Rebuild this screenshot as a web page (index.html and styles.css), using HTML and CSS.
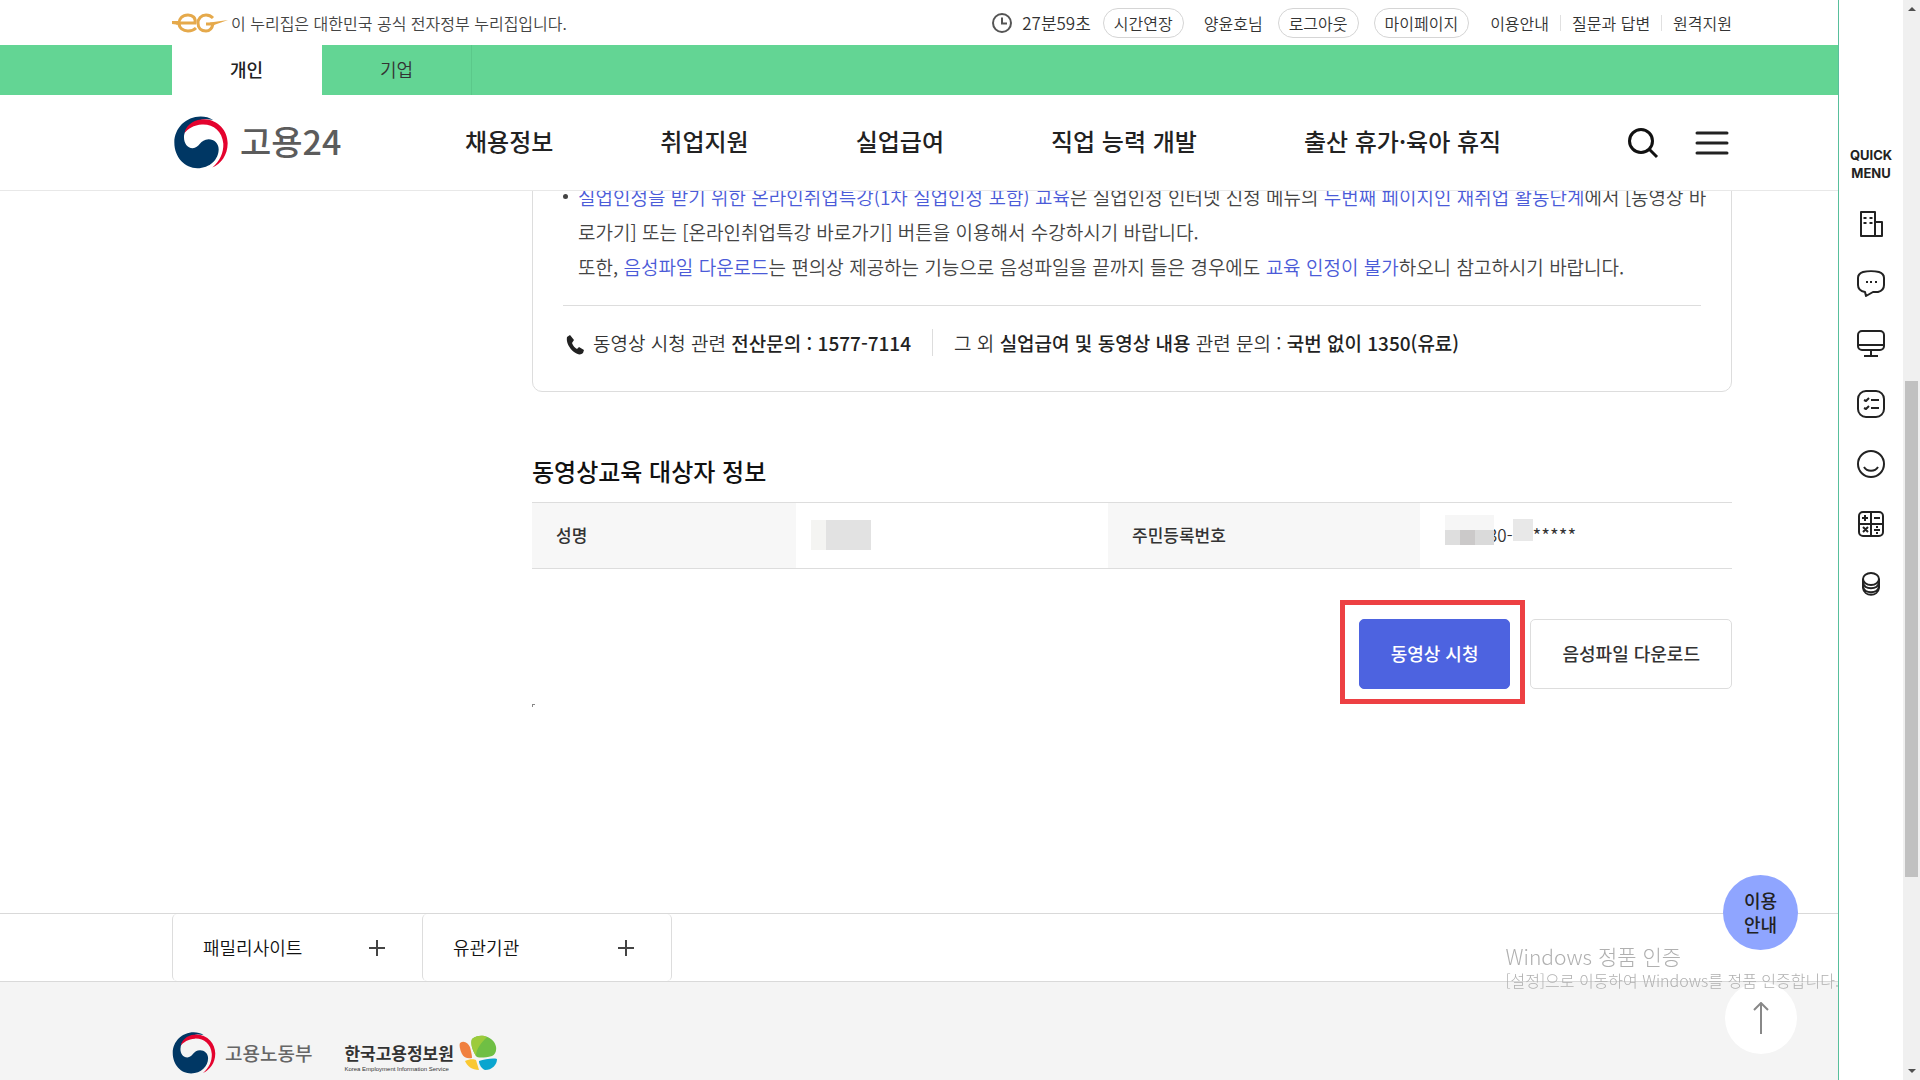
FILE: index.html
```html
<!DOCTYPE html>
<html lang="ko">
<head>
<meta charset="utf-8">
<meta name="viewport" content="width=device-width, initial-scale=1">
<title>고용24</title>
<link rel="stylesheet" href="styles.css">
</head>
<body>
<svg class="defs" width="0" height="0" aria-hidden="true">
  <symbol id="emblem" viewBox="42 351 162 158">
    <path fill="#003764" d="M160 363C148 355 136 352 122 352C78 352 43 387 43 430C43 475 75 507 112 507C150 507 176 480 176 450C176 432 162 420 146 420C120 420 118 447 98 447C82 447 72 432 72 415C72 385 104 364 130 361C142 360 152 361 160 363Z"/>
    <path fill="#e4032e" d="M73 402C80 372 108 360 132 360C175 361 203 395 203 432C203 468 182 495 157 505C180 486 191 460 190 434C187 395 158 374 126 376C102 377 82 390 73 402Z"/>
  </symbol>
</svg>

<div class="page">
  <header class="header">
    <div class="wrap util">
      <svg class="eg" width="56" height="20" viewBox="0 0 56 20" fill="none" stroke="#e5a94b" stroke-width="3" aria-hidden="true">
        <path d="M4 10H23C24 5 21 2 16 2C10 2 7 6 7 10C7 15 11 18 16 18C19 18 22 17 24 15"/>
        <path d="M41 5C39 3 37 2 34 2C29 2 26 6 26 10C26 15 29 18 34 18C38 18 40 16 41 11H34"/>
        <path fill="#e5a94b" stroke="none" d="M0 8H8V12L0 11ZM38 9.500L56 7L42 12H36Z"/>
      </svg>
      <span class="official">이 누리집은 대한민국 공식 전자정부 누리집입니다.</span>
      <div class="util-right">
        <svg class="clock" width="20" height="20" viewBox="0 0 20 20" fill="none" stroke="#555" stroke-width="2" aria-hidden="true"><circle cx="10" cy="10" r="9"/><path d="M10 4.500V10.500H15"/></svg>
        <span class="time">27분59초</span>
        <button class="pill" type="button">시간연장</button>
        <span class="user">양윤호님</span>
        <button class="pill" type="button">로그아웃</button>
        <button class="pill pill-my" type="button">마이페이지</button>
        <ul class="util-links">
          <li><a href="#">이용안내</a></li>
          <li><a href="#">질문과 답변</a></li>
          <li><a href="#">원격지원</a></li>
        </ul>
      </div>
    </div>
    <div class="band">
      <div class="wrap tabs">
        <a class="tab tab-on" href="#">개인</a>
        <a class="tab" href="#">기업</a>
      </div>
    </div>
    <div class="wrap gnb">
      <a class="logo" href="#"><svg width="54" height="53" aria-hidden="true"><use href="#emblem"/></svg><span>고용24</span></a>
      <nav class="menu">
        <a href="#">채용정보</a>
        <a href="#">취업지원</a>
        <a href="#">실업급여</a>
        <a href="#">직업 능력 개발</a>
        <a href="#">출산 휴가·육아 휴직</a>
      </nav>
      <div class="tools">
        <button class="icon-btn" type="button" aria-label="검색"><svg width="32" height="32" viewBox="0 0 32 32" fill="none" stroke="#111" stroke-width="3"><circle cx="14" cy="14" r="11.500"/><path d="M22 22L30 30"/></svg></button>
        <button class="icon-btn" type="button" aria-label="전체메뉴"><svg width="34" height="24" viewBox="0 0 34 24" stroke="#222" stroke-width="3" stroke-linecap="round"><path d="M2 2H32M2 12H32M2 22H32"/></svg></button>
      </div>
    </div>
  </header>

  <main class="main">
    <div class="wrap">
      <div class="content">
        <section class="notice">
          <ul class="notice-list">
            <li><em>실업인정을 받기 위한 온라인취업특강(1차 실업인정 포함) 교육</em>은 실업인정 인터넷 신청 메뉴의 <em>두번째 페이지인 재취업 활동단계</em>에서 [동영상 바<br>로가기] 또는 [온라인취업특강 바로가기] 버튼을 이용해서 수강하시기 바랍니다.<br>또한, <em>음성파일 다운로드</em>는 편의상 제공하는 기능으로 음성파일을 끝까지 들은 경우에도 <em>교육 인정이 불가</em>하오니 참고하시기 바랍니다.</li>
          </ul>
          <div class="contact">
            <svg class="phone" width="18" height="20" viewBox="0 0 18 20" aria-hidden="true"><path fill="#222" d="M1 2L4 0L8 5L6 8C7 11 9 13 11 14L13 12L18 15L17 18C15 20 12 20 8 17C3 13 0 7 1 2Z"/></svg>
            <p class="contact-a">동영상 시청 관련 <strong>전산문의 : 1577-7114</strong></p>
            <p class="contact-b">그 외 <strong>실업급여 및 동영상 내용</strong> 관련 문의 : <strong>국번 없이 1350(유료)</strong></p>
          </div>
        </section>

        <h2 class="title">동영상교육 대상자 정보</h2>
        <table class="info">
          <tbody>
            <tr>
              <th class="col-name" scope="row">성명</th>
              <td><span class="mask mask-name"></span></td>
              <th scope="row">주민등록번호</th>
              <td><div class="rrn"><span class="mask mask-a"></span><span>30-</span><span class="mask mask-b"></span><span class="stars">*****</span></div></td>
            </tr>
          </tbody>
        </table>
        <div class="actions">
          <div class="mark"><button class="btn btn-primary" type="button">동영상 시청</button></div>
          <button class="btn btn-audio" type="button">음성파일 다운로드</button>
        </div>
        <div class="speck"></div>
      </div>
    </div>
  </main>

  <footer class="footer">
    <div class="sites">
      <div class="wrap sites-row">
        <button class="site" type="button">패밀리사이트<svg width="16" height="16" viewBox="0 0 16 16" stroke="#444" stroke-width="2"><path d="M8 0V16M0 8H16"/></svg></button>
        <button class="site" type="button">유관기관<svg width="16" height="16" viewBox="0 0 16 16" stroke="#444" stroke-width="2"><path d="M8 0V16M0 8H16"/></svg></button>
      </div>
    </div>
    <div class="wrap orgs">
      <a class="org" href="#"><svg width="44" height="42" aria-hidden="true"><use href="#emblem"/></svg><span class="org-moel">고용노동부</span></a>
      <a class="org org-b" href="#">
        <span class="org-keis">한국고용정보원<small>Korea Employment Information Service</small></span>
        <svg width="40" height="36" viewBox="0 0 40 36" aria-hidden="true"><path fill="#6fbf44" d="M13 4C20-2 31 1 35 7C39 13 37 19 33 21C25 23 18 23 17 21C14 16 11 9 13 4Z"/><path fill="#9ccb3b" d="M13 4C18 0 24 0 28 2C22 8 17 14 17 21C14 16 11 9 13 4Z"/><path fill="#f08040" d="M1 8C5 5 9 8 11 12C12 16 13 20 13 23C9 24 5 23 3 19C1 15 0 10 1 8Z"/><path fill="#fac832" d="M6 26C10 24 15 24 17 25L20 35C13 35 8 31 6 26Z"/><path fill="#0aa5cf" d="M20 26C26 24 34 23 38 24C38 30 33 35 26 35C23 34 20 30 20 26Z"/></svg>
      </a>
    </div>
  </footer>
</div>

<div class="floats">
  <button class="guide" type="button">이용<br>안내</button>
  <button class="top" type="button" aria-label="맨 위로"><svg width="16" height="32" viewBox="0 0 16 32" fill="none" stroke="#888" stroke-width="2"><path d="M8 32V2M1 8L8 1L15 8"/></svg></button>
</div>

<div class="activation"><p class="act-title">Windows 정품 인증</p><p class="act-text">[설정]으로 이동하여 Windows를 정품 인증합니다.</p></div>

<aside class="quick">
  <p class="quick-title">QUICK<br>MENU</p>
  <a href="#" aria-label="기업"><svg viewBox="0 0 28 28"><path d="M4 2H18V26H4ZM18 12H25V26H18"/><path d="M8 7V9M14 7V9M8 12V14M14 12V14" stroke-width="3"/></svg></a>
  <a href="#" aria-label="상담"><svg viewBox="0 0 28 28"><path d="M6 2C10 1 18 1 22 2C25 3 27 5 27 8V15C27 19 25 21 21 22H16L9 26L8 22C3 21 1 19 1 15V8C1 5 3 3 6 2Z"/><path d="M9 12H11M13 12H15M18 12H20"/></svg></a>
  <a href="#" aria-label="화면"><svg viewBox="0 0 28 28"><rect x="1" y="1" width="26" height="19" rx="4"/><path d="M1 15H27M14 20V26M7 26H21"/></svg></a>
  <a href="#" aria-label="목록"><svg viewBox="0 0 28 28"><rect x="1" y="1" width="26" height="26" rx="8"/><path d="M7 10L9 11L12 8M14 10H22M7 18L9 19L12 16M14 18H22"/></svg></a>
  <a href="#" aria-label="만족도"><svg viewBox="0 0 28 28"><circle cx="14" cy="14" r="13"/><path d="M7 17C10 22 18 22 21 17"/></svg></a>
  <a href="#" aria-label="계산기"><svg viewBox="0 0 28 28"><rect x="2" y="2" width="24" height="24" rx="4"/><path d="M14 2V26M2 14H26M5 8H11M8 5V11M17 8H23M6 17L11 22M11 17L6 22M17 20H23M20 16V18M20 22V24"/></svg></a>
  <a href="#" aria-label="수당"><svg viewBox="0 0 28 28"><ellipse cx="14" cy="9" rx="8" ry="6"/><path d="M6 9V18C7 27 21 27 22 18V9M6 13C8 20 20 20 22 13M6 17C8 24 20 24 22 17"/></svg></a>
</aside>

<div class="scroll" aria-hidden="true">
  <svg width="8" height="4" viewBox="0 0 8 4"><path fill="#505050" d="M0 4L4 0L8 4Z"/></svg>
  <div class="track"><div class="thumb"></div></div>
  <svg width="8" height="4" viewBox="0 0 8 4"><path fill="#505050" d="M0 0L4 4L8 0Z"/></svg>
</div>
</body>
</html>
```
FILE: styles.css
```css
* { box-sizing: border-box; }
html, body { height: 100%; }
body {
  margin: 0;
  overflow: hidden;
  background: #fff;
  color: #333;
  font-family: "Noto Sans CJK KR", sans-serif;
  font-size: 19px;
  font-weight: 350;
}
a { color: inherit; text-decoration: none; }
button { font-family: inherit; color: inherit; cursor: pointer; }
ul { margin: 0; padding: 0; list-style: none; }
p { margin: 0; }
em { font-style: normal; color: #4b5bd8; }
strong { font-weight: 500; color: #222; }
.defs { position: absolute; }

.page { display: flex; flex-direction: column; min-height: 100%; padding-right: 16px; }
.wrap { max-width: 1560px; margin: 0 auto; }

/* header */
.header { position: relative; z-index: 1; background: #fff; border-bottom: 1px solid #e8e8e8; }
.util { display: flex; align-items: center; height: 45px; }
.official { margin-left: 3px; font-size: 16px; line-height: 24px; color: #444; }
.util-right { display: flex; align-items: center; margin-left: auto; font-size: 16px; line-height: 24px; }
.time { margin: 0 12px 0 10px; font-size: 17px; }
.pill {
  height: 30px; padding: 0 10px; border: 1px solid #d5d5d5; border-radius: 15px;
  background: #fff; font-size: 16px; font-weight: 350; line-height: 24px;
}
.user { margin: 0 15px 0 20px; }
.pill-my { margin-left: 15px; }
.util-links { display: flex; margin-left: 10px; }
.util-links li { display: flex; align-items: center; padding: 0 11px; }
.util-links li + li::before { content: ""; width: 1px; height: 16px; margin: 0 11px 0 -11px; background: #e0e0e0; }
.util-links li:last-child { padding-right: 0; }

.band { background: #63d594; }
.tabs { display: flex; }
.tab {
  width: 150px; height: 50px; border-right: 1px solid #5bc88a;
  font-size: 18px; line-height: 48px; text-align: center;
}
.tab-on { background: #fff; border-color: #fff; font-weight: 500; color: #222; }

.gnb { display: flex; align-items: center; height: 95px; }
.logo { display: flex; align-items: center; gap: 12px; width: 293px; padding-left: 2px; font-size: 34px; font-weight: 500; line-height: 40px; color: #5c5c5c; }
.logo span { padding-bottom: 3px; }
.menu { display: flex; gap: 107px; padding-bottom: 3px; font-size: 24px; font-weight: 500; line-height: 36px; color: #222; white-space: nowrap; }
.tools { display: flex; align-items: center; gap: 36px; margin-left: auto; padding-right: 3px; }
.icon-btn { display: flex; padding: 0; border: 0; background: none; }

/* content */
.content { margin-left: 360px; }
.notice { margin-top: -40px; padding: 27px 30px 35px; border: 1px solid #ddd; border-radius: 10px; }
.notice-list { padding-bottom: 21px; border-bottom: 1px solid #ddd; line-height: 35px; color: #444; white-space: nowrap; }
.notice-list li { position: relative; padding-left: 15px; }
.notice-list li::before { content: ""; position: absolute; left: 0; top: 15px; width: 5px; height: 5px; border-radius: 50%; background: #444; }
.contact { display: flex; align-items: center; padding-top: 23px; line-height: 27px; }
.phone { margin: 4px 9px 0 3px; }
.contact-b { margin-left: 21px; padding-left: 21px; border-left: 1px solid #ddd; }

.title { margin: 61px 0 13px; font-size: 24px; font-weight: 500; line-height: 36px; color: #111; }
.info { width: 100%; border-collapse: collapse; table-layout: fixed; border: solid #ddd; border-width: 1px 0; font-size: 17px; }
.info th, .info td { height: 66px; padding: 0 24px 2px; font-weight: 350; text-align: left; }
.info th { background: #f7f7f7; font-weight: 500; }
.info .col-name { width: 22%; }
.info td:nth-child(2) { padding-left: 15px; }
.rrn { display: flex; align-items: center; margin-left: 1px; }
.mask { display: block; }
.mask-name { width: 60px; height: 30px; background: linear-gradient(90deg, #f4f4f2 15px, #e2e2e2 15px); }
.mask-a {
  z-index: 1; width: 49px; height: 30px; margin: 0 -6px 9px 0;
  background: linear-gradient(#f6f6f6 15px, transparent 15px), linear-gradient(90deg, #dedede 15px, #cbc9c9 15px 30px, #dadada 30px);
}
.mask-b { width: 20px; height: 22px; margin-bottom: 9px; background: #e8e8e8; }
.stars { font-size: 19px; }

.actions { display: flex; justify-content: flex-end; align-items: flex-start; gap: 5px; margin-top: 31px; }
.mark { padding: 14px 10px 10px 14px; border: 5px solid #ed4043; }
.btn {
  height: 70px; padding: 0 31px 2px; border: 1px solid #ddd; border-radius: 5px;
  background: #fff; font-size: 18px; font-weight: 500; line-height: 27px;
}
.btn-primary { display: block; border-color: #4d63e0; background: #4d63e0; color: #fff; }
.btn-audio { margin-top: 19px; }
.speck { width: 3px; height: 3px; border: solid #888; border-width: 1px 0 0 1px; }

/* footer */
.footer { flex: 1; margin-top: 206px; background: #f4f4f4; }
.sites { border: solid #d9d9d9; border-width: 1px 0; background: #fff; }
.sites-row { display: flex; }
.site {
  display: flex; align-items: center; justify-content: space-between;
  width: 250px; height: 67px; padding: 0 37px 0 30px; border: 0; border-left: 1px solid #ddd; border-radius: 5px;
  background: #fff; font-size: 18px; font-weight: 350; line-height: 27px; color: #111;
}
.site:last-child { border-right: 1px solid #ddd; }
.orgs { display: flex; gap: 32px; padding-top: 50px; }
.org { display: flex; align-items: center; gap: 9px; }
.org-b { gap: 5px; }
.org-moel { font-size: 19px; font-weight: 500; line-height: 24px; color: #666; }
.org-keis { display: flex; flex-direction: column; margin-top: 8px; font-size: 17px; font-weight: 700; line-height: 24px; color: #333; }
.org-keis small { font-family: "Liberation Sans", sans-serif; font-size: 6px; font-weight: 400; line-height: 8px; }

/* floating layers */
.floats { position: fixed; right: 122px; bottom: 26px; z-index: 2; display: flex; flex-direction: column; align-items: center; gap: 32px; }
.guide { width: 75px; height: 75px; padding: 0 0 2px; border: 0; border-radius: 50%; background: #8fa5ff; font-size: 18px; font-weight: 500; line-height: 24px; color: #222; }
.top { display: flex; align-items: center; justify-content: center; width: 72px; height: 72px; border: 0; border-radius: 50%; background: #fff; }
.activation { position: fixed; right: 81px; bottom: 89px; z-index: 3; color: #b0b0b0; font-weight: 300; white-space: nowrap; }
.act-title { font-size: 21px; line-height: 26px; }
.act-text { font-size: 16px; line-height: 22px; }
.quick {
  position: fixed; top: 0; right: 17px; bottom: 0; z-index: 4; width: 65px;
  display: flex; flex-direction: column; align-items: center; gap: 32px; padding-top: 146px;
  border-left: 1px solid #58bf9c; background: #fff;
}
.quick-title { margin-bottom: -4px; font-family: Inter, sans-serif; font-size: 13px; font-weight: 700; line-height: 18px; text-align: center; color: #222; }
.quick a { display: flex; }
.quick svg { width: 28px; height: 28px; fill: none; stroke: #222; stroke-width: 2; stroke-linejoin: round; }
.scroll { position: fixed; top: 0; right: 0; bottom: 0; z-index: 4; width: 17px; display: flex; flex-direction: column; align-items: center; padding: 7px 0; background: #f0f0f0; }
.track { flex: 1; width: 13px; padding: 370px 0 192px; }
.thumb { height: 100%; background: #c1c1c1; }
```
